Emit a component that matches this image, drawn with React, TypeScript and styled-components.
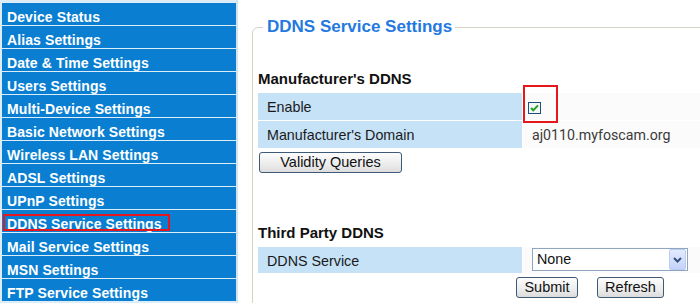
import React from "react";
import styled, { createGlobalStyle } from "styled-components";

const GlobalStyle = createGlobalStyle`
  html, body {
    margin: 0;
    padding: 0;
    background: #ffffff;
    overflow: hidden;
  }
  body {
    font-family: "Liberation Sans", Arial, sans-serif;
  }
`;

const SPage = styled.div`
  display: flex;
  width: 700px;
  height: 303px;
  overflow: hidden;
  background: #ffffff;
`;

const SSidebar = styled.nav`
  flex: 0 0 auto;
  display: flex;
  flex-direction: column;
  gap: 1px;
  width: 234px;
  padding: 3px 0 0 2px;
  border-right: 2px solid #cfe5f4;
  background: #dcedf8;
`;

const SNavItem = styled.div`
  position: relative;
  flex: 0 0 22px;
  height: 22px;
  overflow: hidden;
  box-sizing: border-box;
  padding: 6px 0 0 5px;
  background: #0a7fd2;
  color: #ffffff;
  font-size: 14px;
  font-weight: bold;
  line-height: 16px;
  letter-spacing: 0.1px;
  white-space: nowrap;
`;

const SNavMark = styled.span`
  position: absolute;
  left: 1px;
  top: 4px;
  width: 167px;
  height: 17px;
  box-sizing: border-box;
  border: 2px solid #e5161c;
`;

const SMain = styled.main`
  flex: 1 1 auto;
  padding: 17px 0 0 14px;
`;

const SFieldset = styled.fieldset`
  margin: 0;
  width: 470px;
  min-width: 0;
  padding: 0 0 20px 5px;
  border: 1px solid #d5d2c3;
  border-radius: 6px;
`;

const SLegend = styled.legend`
  margin-left: 5px;
  padding: 0 3px 0 4px;
  color: #2479e0;
  font-size: 17px;
  font-weight: bold;
  line-height: 20px;
`;

const SSectionTitle = styled.div<{ $top: number }>`
  margin-top: ${(p) => p.$top}px;
  color: #111111;
  font-size: 15px;
  font-weight: bold;
  line-height: 18px;
`;

const SGrid = styled.div<{ $rowHeight: number }>`
  display: grid;
  grid-template-columns: 264px 1fr;
  grid-auto-rows: ${(p) => p.$rowHeight}px;
  row-gap: 1px;
  column-gap: 1px;
  margin-top: 5px;
`;

const SLabel = styled.div`
  padding: 2px 0 0 9px;
  background: #c6e2f7;
  color: #1a1a1a;
  font-size: 14.3px;
  line-height: 24px;
  white-space: nowrap;
`;

const SValue = styled.div`
  position: relative;
  display: flex;
  align-items: flex-start;
  background: #fbfbfb;
`;

const SDomain = styled.span`
  padding: 5px 0 0 9px;
  color: #3a3a3a;
  font-family: Roboto, "Liberation Sans", sans-serif;
  font-size: 14.2px;
  line-height: 18px;
`;

const SCheck = styled.span`
  margin: 9px 0 0 5px;
  width: 13px;
  height: 12px;
  display: flex;
`;

const SCallout = styled.span`
  position: absolute;
  z-index: 2;
  left: 0;
  top: -8px;
  width: 35px;
  height: 38px;
  box-sizing: border-box;
  border: 2px solid #e5161c;
`;

const SButton = styled.button<{ $width: number }>`
  width: ${(p) => p.$width}px;
  height: 21px;
  padding: 0;
  border: 1px solid #3d5a78;
  border-radius: 3px;
  background: linear-gradient(#fdfdfd, #ececec 60%, #dcdcdc);
  color: #111111;
  font-family: "Liberation Sans", Arial, sans-serif;
  font-size: 14.5px;
  line-height: 19px;
`;

const SQueryRow = styled.div`
  margin-top: 4px;
  padding-left: 1px;
`;

const SActionRow = styled.div`
  display: flex;
  gap: 19px;
  margin-top: 4px;
  padding-left: 258px;
`;

const SSelect = styled.div`
  display: flex;
  align-items: center;
  margin: 1px 0 0 9px;
  width: 156px;
  height: 23px;
  box-sizing: border-box;
  border: 1px solid #8fa6c0;
  background: #ffffff;
`;

const SSelectText = styled.span`
  flex: 1;
  padding-left: 4px;
  color: #111111;
  font-size: 14.3px;
  line-height: 21px;
`;

const SSelectArrow = styled.span`
  display: flex;
  align-items: center;
  justify-content: center;
  width: 15px;
  height: 19px;
  margin-right: 1px;
  border: 1px solid #bccbef;
  border-radius: 2px;
  background: linear-gradient(#e2eafd, #c3d3fa);
`;

const menu = [
  "Device Status",
  "Alias Settings",
  "Date & Time Settings",
  "Users Settings",
  "Multi-Device Settings",
  "Basic Network Settings",
  "Wireless LAN Settings",
  "ADSL Settings",
  "UPnP Settings",
  "DDNS Service Settings",
  "Mail Service Settings",
  "MSN Settings",
  "FTP Service Settings",
];

function CheckIcon() {
  return (
    <svg width="13" height="12" viewBox="0 0 13 12">
      <rect x="0.5" y="0.5" width="12" height="11" fill="#f4f6f8" stroke="#1f4f7f" />
      <path d="M3 6 L5.3 8.3 L10 3.4" fill="none" stroke="#22a322" strokeWidth="2" />
    </svg>
  );
}

function ChevronIcon() {
  return (
    <svg width="9" height="6" viewBox="0 0 9 6">
      <path d="M1 1 L4.5 4.5 L8 1" fill="none" stroke="#35507e" strokeWidth="2" />
    </svg>
  );
}

function App() {
  return (
    <SPage>
      <GlobalStyle />
      <SSidebar>
        {menu.map((item) => (
          <SNavItem key={item}>
            {item}
            {item === "DDNS Service Settings" && <SNavMark />}
          </SNavItem>
        ))}
      </SSidebar>
      <SMain>
        <SFieldset>
          <SLegend>DDNS Service Settings</SLegend>
          <SSectionTitle $top={33}>Manufacturer's DDNS</SSectionTitle>
          <SGrid $rowHeight={27}>
            <SLabel>Enable</SLabel>
            <SValue>
              <SCheck>
                <CheckIcon />
              </SCheck>
              <SCallout />
            </SValue>
            <SLabel>Manufacturer's Domain</SLabel>
            <SValue>
              <SDomain>aj0110.myfoscam.org</SDomain>
            </SValue>
          </SGrid>
          <SQueryRow>
            <SButton $width={143}>Validity Queries</SButton>
          </SQueryRow>
          <SSectionTitle $top={51}>Third Party DDNS</SSectionTitle>
          <SGrid $rowHeight={26}>
            <SLabel>DDNS Service</SLabel>
            <SValue>
              <SSelect>
                <SSelectText>None</SSelectText>
                <SSelectArrow>
                  <ChevronIcon />
                </SSelectArrow>
              </SSelect>
            </SValue>
          </SGrid>
          <SActionRow>
            <SButton $width={62}>Submit</SButton>
            <SButton $width={67}>Refresh</SButton>
          </SActionRow>
        </SFieldset>
      </SMain>
    </SPage>
  );
}

export default App;
